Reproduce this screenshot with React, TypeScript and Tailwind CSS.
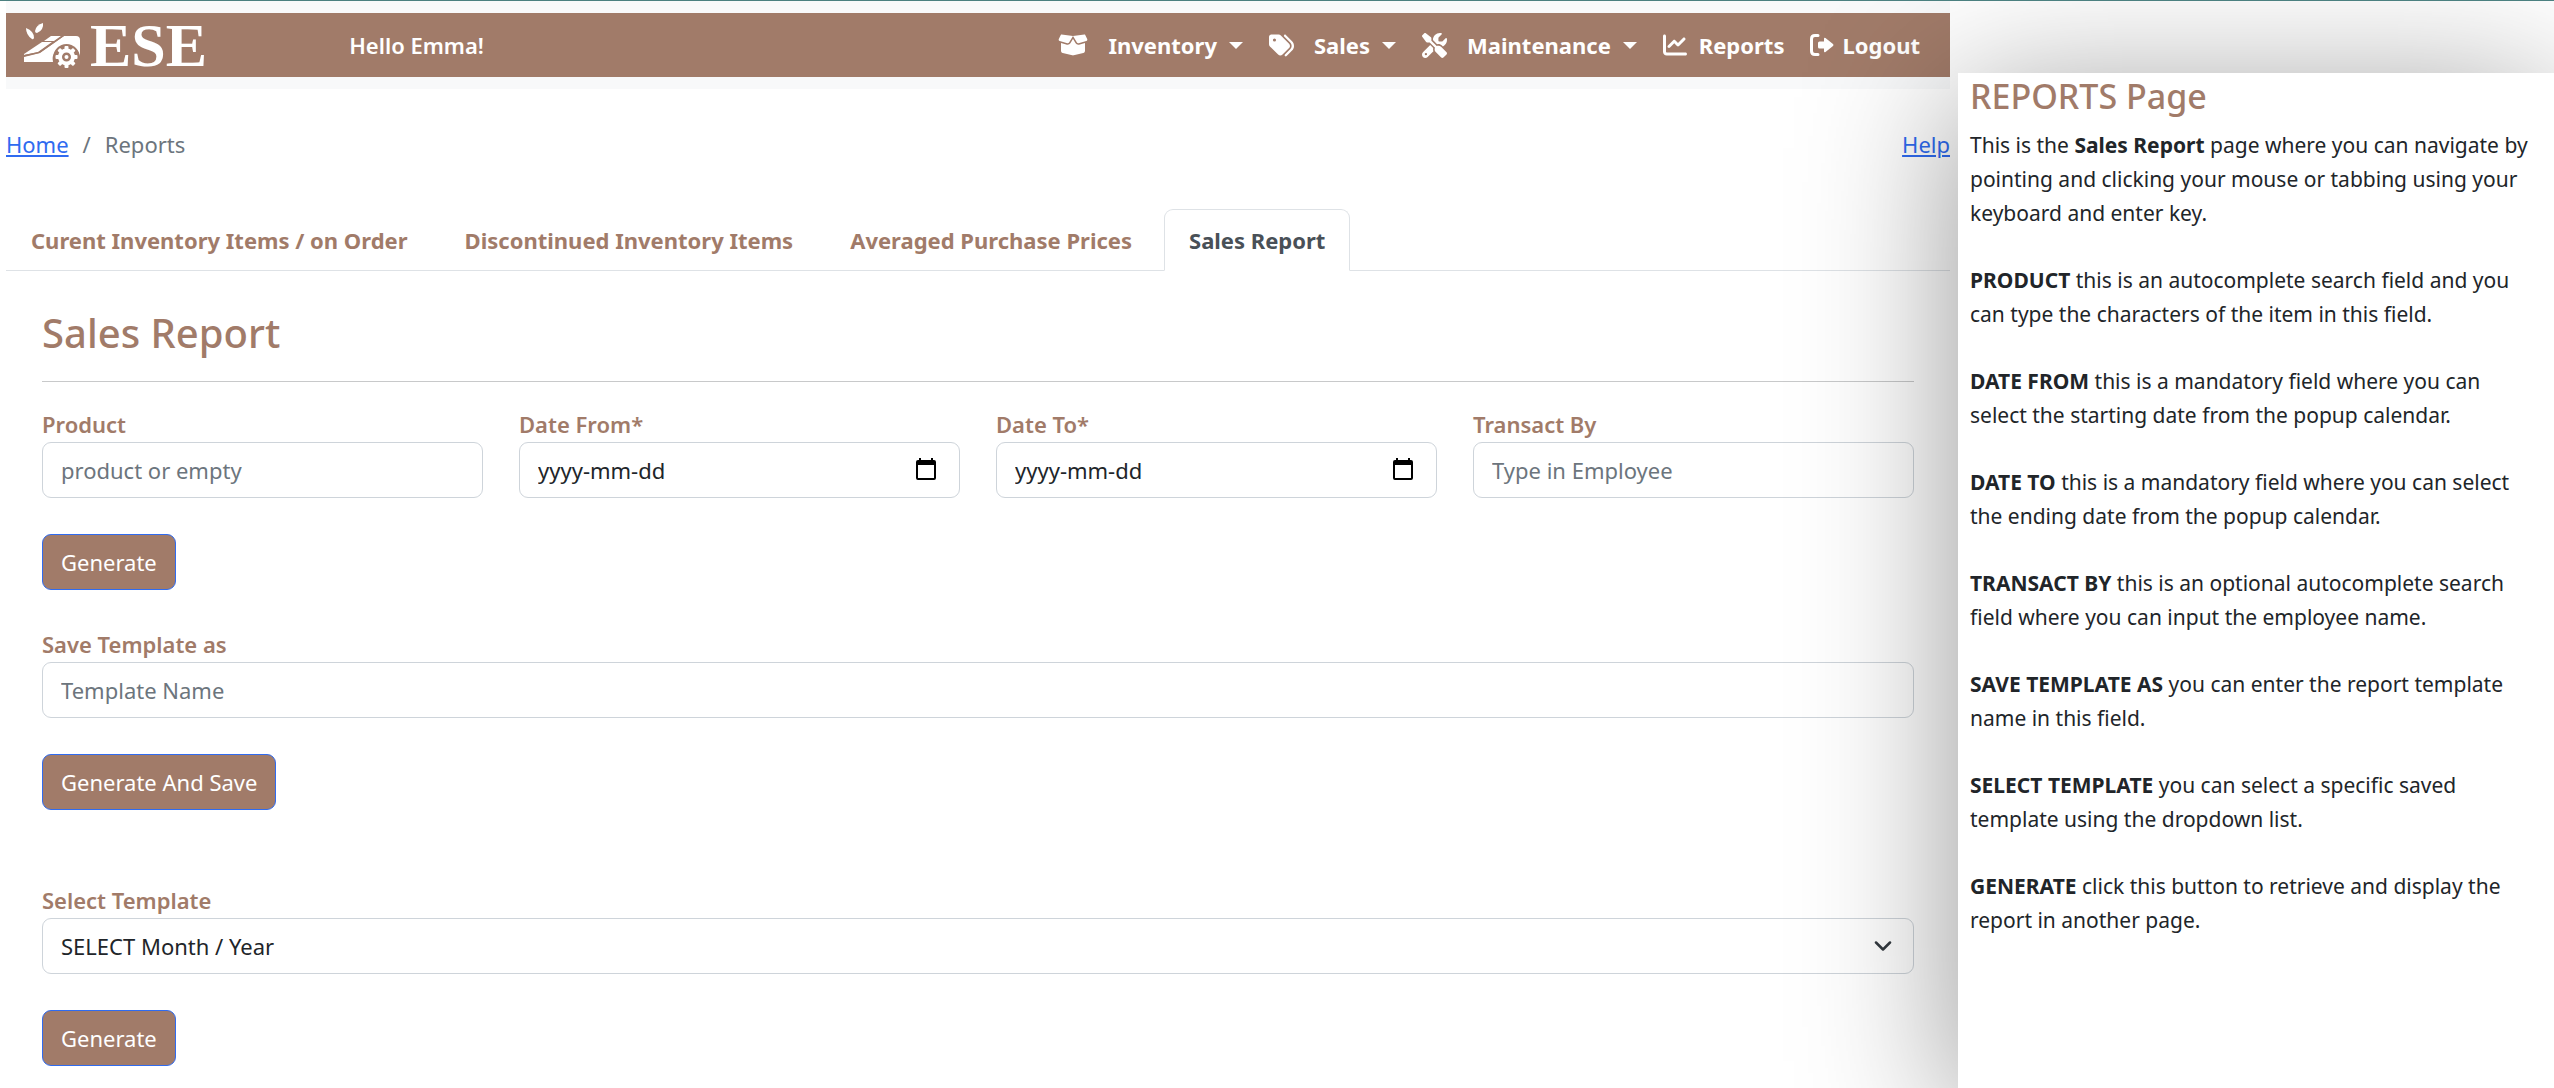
import type { ReactNode } from "react";
import { FaBoxOpen, FaTags, FaScrewdriverWrench, FaChartLine } from "react-icons/fa6";

const tabs = [
  { label: "Curent Inventory Items / on Order", active: false },
  { label: "Discontinued Inventory Items", active: false },
  { label: "Averaged Purchase Prices", active: false },
  { label: "Sales Report", active: true },
];

const help: { term?: string; body: ReactNode }[] = [
  {
    body: (
      <>
        This is the <b>Sales Report</b> page where you can navigate by pointing and clicking your mouse or
        tabbing using your keyboard and enter key.
      </>
    ),
  },
  { term: "PRODUCT", body: "this is an autocomplete search field and you can type the characters of the item in this field." },
  { term: "DATE FROM", body: "this is a mandatory field where you can select the starting date from the popup calendar." },
  { term: "DATE TO", body: "this is a mandatory field where you can select the ending date from the popup calendar." },
  { term: "TRANSACT BY", body: "this is an optional autocomplete search field where you can input the employee name." },
  { term: "SAVE TEMPLATE AS", body: "you can enter the report template name in this field." },
  { term: "SELECT TEMPLATE", body: "you can select a specific saved template using the dropdown list." },
  { term: "GENERATE", body: "click this button to retrieve and display the report in another page." },
];

const teeth = [0, 45, 90, 135, 180, 225, 270, 315];

function Logo() {
  return (
    <a href="#home" aria-label="ESE home" className="flex items-center gap-[10px] text-white">
      <svg viewBox="0 0 56 46" className="h-[46px] w-14" fill="currentColor" aria-hidden="true">
        <path d="M2 6q8 3 8 10-1 2-2 1-6-4-6-11Z" />
        <path d="M19 1q1 7-6 10-2 0-2-2 1-6 8-8Z" />
        <path d="M20 19l7-5h10l-7 5Z" />
        <path d="M18 20h10L14 30 0 33v-1Z" />
        <path d="M0 40v-5l16-4 24-17h12q4 0 4 4v16A13.500 13.500 0 0 0 29 40Z" />
        <path d="M0 34.500 15.500 31 40 14h-2L14.500 30 0 33Z" fill="#a17b69" />
        <circle cx="42.500" cy="35" r="13" fill="#a17b69" />
        <circle cx="42.500" cy="35" r="6.500" fill="none" stroke="currentColor" strokeWidth="4" />
        <circle cx="42.500" cy="35" r="2" />
        {teeth.map((a) => (
          <rect key={a} x="40.500" y="24" width="4" height="4" rx="1" transform={`rotate(${a} 42.500 35)`} />
        ))}
      </svg>
      <span className="font-['Liberation_Serif',serif] text-[62px] leading-[62px] font-bold">ESE</span>
    </a>
  );
}

function Caret() {
  return (
    <svg viewBox="0 0 14 7" className="h-[7px] w-[14px]" fill="currentColor" aria-hidden="true">
      <path d="M0 0h14L7 7Z" />
    </svg>
  );
}

function LogoutIcon() {
  return (
    <svg viewBox="0 0 24 22" className="h-[22px] w-6" aria-hidden="true">
      <path d="M8 1.5H5Q1.500 1.500 1.500 5v12q0 3.500 3.500 3.500h3" fill="none" stroke="currentColor" strokeWidth="3" strokeLinecap="round" />
      <path d="M8 9q0-1.500 1.500-1.500H14V5q0-2 1.500-1l7.500 6q1 1 0 2l-7.500 6q-1.500 1-1.500-1v-2.500H9.500Q8 14.500 8 13Z" fill="currentColor" />
    </svg>
  );
}

const controlClass =
  "block h-14 w-full rounded-[9px] border border-[#ced4da] bg-transparent px-[18px] text-[22px] leading-9";
const labelClass = "block text-[22px] leading-9 font-semibold text-[#a17b69]";

function TextField({ id, label, placeholder }: { id: string; label: string; placeholder: string }) {
  return (
    <div>
      <label htmlFor={id} className={labelClass}>{label}</label>
      <input id={id} type="text" placeholder={placeholder} className={`${controlClass} placeholder:text-[#6c757d]`} />
    </div>
  );
}

function DateField({ id, label }: { id: string; label: string }) {
  return (
    <div>
      <label htmlFor={id} className={labelClass}>{label}</label>
      <div className="relative">
        <input id={id} type="text" placeholder="yyyy-mm-dd" className={`${controlClass} placeholder:text-[#212529]`} />
        <button type="button" aria-label={`Open calendar for ${label}`} className="absolute top-4 right-6 text-black">
          <svg viewBox="0 0 20 22" className="h-[22px] w-5" aria-hidden="true">
            <path fill="currentColor" fillRule="evenodd" d="M3 0h2v2h10V0h2v2h1q2 0 2 2v16q0 2-2 2H2q-2 0-2-2V4q0-2 2-2h1ZM2 7v13h16V7Z" />
          </svg>
        </button>
      </div>
    </div>
  );
}

function ActionButton({ children }: { children: ReactNode }) {
  return (
    <button type="button" className="h-14 rounded-[9px] border border-[#2f6bf0] bg-[#a17b69] px-[18px] text-[22px] leading-9 text-white">
      {children}
    </button>
  );
}

export default function App() {
  return (
    <div className="flex min-h-screen gap-2 overflow-hidden border-t border-[#4b8080] bg-white pl-[6px] font-['Noto_Sans',sans-serif] text-[#212529]">
      <div className="min-w-0 flex-1">
        <header className="bg-[#f8f9fa] py-3">
          <nav className="flex h-16 items-center bg-[#a17b69] pr-[30px] pl-[18px] text-[22px] font-bold text-white">
            <Logo />
            <span className="ml-[142px] font-semibold">Hello Emma!</span>
            <div className="ml-auto flex items-center gap-[26px]">
              <button type="button" className="flex items-center">
                <FaBoxOpen className="mr-5 size-[30px]" /><span className="mr-3">Inventory</span><Caret />
              </button>
              <button type="button" className="flex items-center">
                <FaTags className="mr-5 size-[25px]" /><span className="mr-3">Sales</span><Caret />
              </button>
              <button type="button" className="flex items-center">
                <FaScrewdriverWrench className="mr-5 size-[25px]" /><span className="mr-3">Maintenance</span><Caret />
              </button>
              <a href="#reports" className="flex items-center gap-3"><FaChartLine className="size-6" />Reports</a>
              <a href="#logout" className="flex items-center gap-2"><LogoutIcon />Logout</a>
            </div>
          </nav>
        </header>

        <div className="mt-[37px] flex justify-between text-[22px] leading-9">
          <nav aria-label="Breadcrumb" className="flex gap-[14px] text-[#6c757d]">
            <a href="#home" className="text-[#2f6bf0] underline">Home</a>
            <span>/</span>
            <span>Reports</span>
          </nav>
          <a href="#help" className="text-[#2f6bf0] underline">Help</a>
        </div>

        <div role="tablist" className="mt-[47px] flex gap-[7px] border-b border-[#dee2e6] text-[22px] leading-9 font-bold">
          {tabs.map((t) => (
            <button
              key={t.label}
              type="button"
              role="tab"
              aria-selected={t.active}
              className={
                t.active
                  ? "-mb-px rounded-t-[9px] border border-[#dee2e6] border-b-white bg-white px-6 py-3 text-[#495057]"
                  : "-mb-px border border-transparent px-6 py-3 text-[#a17b69]"
              }
            >
              {t.label}
            </button>
          ))}
        </div>

        <main className="px-9 pt-9">
          <h1 className="text-[40px] leading-[52px] font-medium text-[#a17b69]">Sales Report</h1>
          <hr className="mt-[22px] border-[#c8c9ca]" />
          <form onSubmit={(e) => e.preventDefault()} className="flex flex-col gap-9 pt-6">
            <div className="grid grid-cols-4 gap-9">
              <TextField id="product" label="Product" placeholder="product or empty" />
              <DateField id="from" label="Date From*" />
              <DateField id="to" label="Date To*" />
              <TextField id="employee" label="Transact By" placeholder="Type in Employee" />
            </div>
            <div><ActionButton>Generate</ActionButton></div>
            <TextField id="template" label="Save Template as" placeholder="Template Name" />
            <div><ActionButton>Generate And Save</ActionButton></div>
            <div className="pt-9">
              <label htmlFor="saved" className={labelClass}>Select Template</label>
              <div className="relative">
                <select id="saved" className={`${controlClass} appearance-none`}>
                  <option>SELECT Month / Year</option>
                </select>
                <svg viewBox="0 0 18 10" className="pointer-events-none absolute top-[23px] right-[22px] h-[10px] w-[18px]" fill="none" stroke="#343a40" strokeWidth="2.500" strokeLinecap="round" strokeLinejoin="round" aria-hidden="true">
                  <path d="m2 1.500 7 7 7-7" />
                </svg>
              </div>
            </div>
            <div><ActionButton>Generate</ActionButton></div>
          </form>
        </main>
      </div>

      <aside className="relative mt-[72px] w-[596px] shrink-0 bg-white px-3 shadow-[0_24px_144px_rgba(0,0,0,0.42)]">
        <h2 className="pt-[3px] text-[34px] leading-10 font-medium text-[#a17b69]">REPORTS Page</h2>
        <div className="mt-3 flex flex-col gap-[33px] text-[21px] leading-[34px]">
          {help.map((h, i) => (
            <p key={i}>{h.term && <b>{h.term} </b>}{h.body}</p>
          ))}
        </div>
      </aside>
    </div>
  );
}
